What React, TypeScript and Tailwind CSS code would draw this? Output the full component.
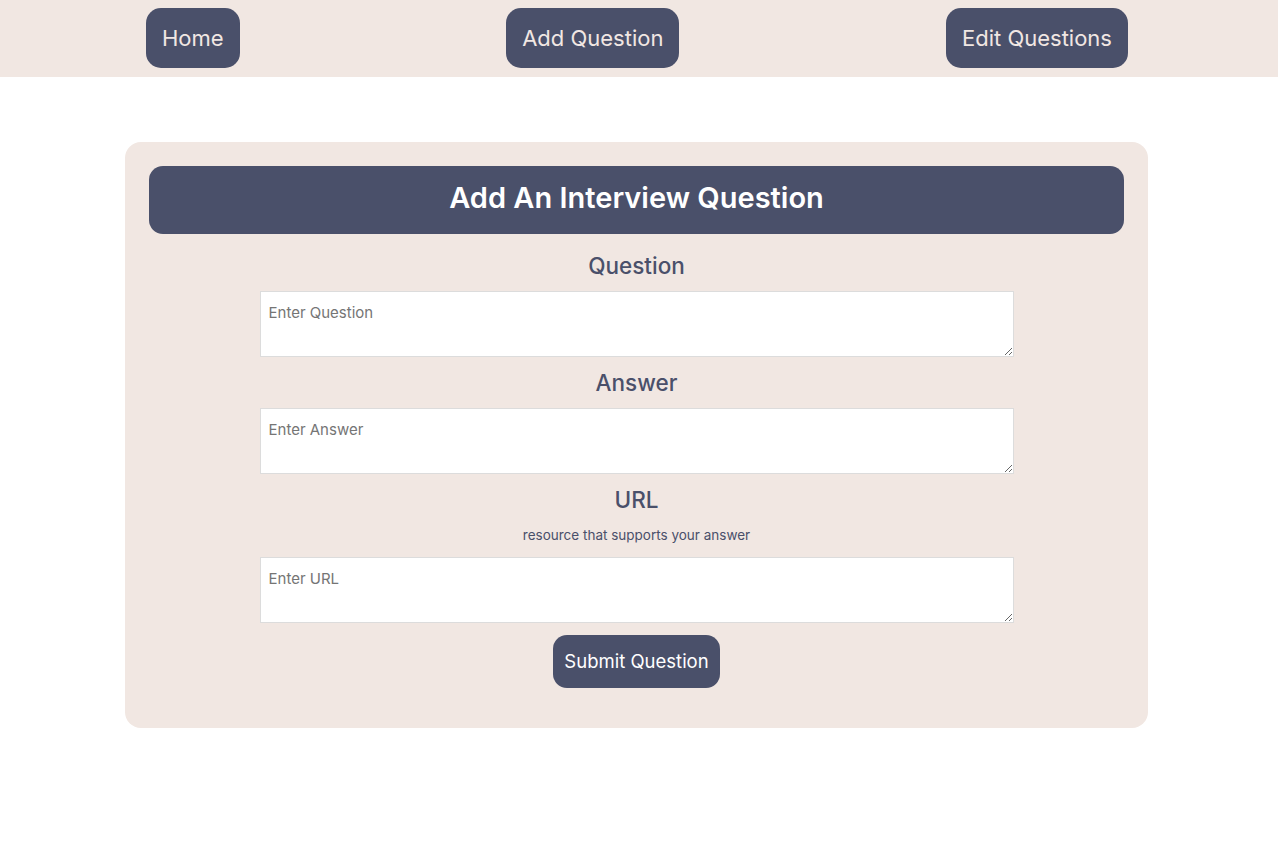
import React from "react";

const NavButton = ({ label }: { label: string }) => (
  <button className="h-[60px] px-4 rounded-[15px] bg-[#4a506a] text-[#f1e7e3] text-[22px] leading-none">
    {label}
  </button>
);

const Field = ({ placeholder }: { placeholder: string }) => (
  <textarea
    className="block w-[754px] h-[66px] mx-auto bg-white border border-[#dcdcdc] px-2 py-[10px] text-[15px] text-[#333] placeholder:text-[#757575] outline-none"
    placeholder={placeholder}
  />
);

const Label = ({ text }: { text: string }) => (
  <h3 className="text-center text-[22.5px] leading-[26px] font-medium text-[#4a506a]">{text}</h3>
);

export default function App() {
  const [form, setForm] = React.useState({ question: "", answer: "", url: "" });

  return (
    <div className="min-h-screen bg-white font-['Inter',sans-serif]">
      <nav className="h-[77px] bg-[#f1e7e2] flex items-start pt-2 justify-between pl-[146px] pr-[150px]">
        <NavButton label="Home" />
        <NavButton label="Add Question" />
        <NavButton label="Edit Questions" />
      </nav>

      <div className="ml-[125px] mt-[65px] w-[1023px] rounded-2xl bg-[#f1e7e2] px-6 pt-6 pb-10">
        <div className="h-[68px] rounded-[14px] bg-[#4a506a] flex items-center justify-center pb-[5px]">
          <h1 className="text-white text-[29px] font-semibold">Add An Interview Question</h1>
        </div>

        <div className="mt-[19px]">
          <Label text="Question" />
        </div>
        <div className="mt-[12px]">
          <Field placeholder="Enter Question" />
        </div>

        <div className="mt-[13px]">
          <Label text="Answer" />
        </div>
        <div className="mt-[12px]">
          <Field placeholder="Enter Answer" />
        </div>

        <div className="mt-[13px]">
          <Label text="URL" />
        </div>
        <p className="mt-[14px] text-center text-[13.5px] leading-4 text-[#4a506a]">
          resource that supports your answer
        </p>
        <div className="mt-[14px]">
          <Field placeholder="Enter URL" />
        </div>

        <div className="mt-[12px] flex justify-center">
          <button
            className="h-[53px] px-[11px] rounded-[14px] bg-[#4a506a] text-white text-[18.5px]"
            onClick={() => setForm({ ...form })}
          >
            Submit Question
          </button>
        </div>
      </div>
    </div>
  );
}
